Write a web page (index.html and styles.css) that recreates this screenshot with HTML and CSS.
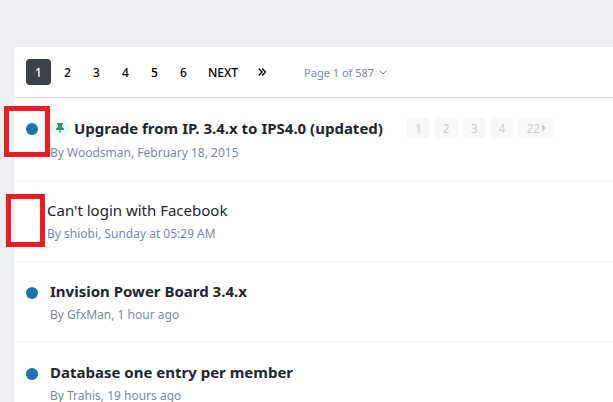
FILE: index.html
```
<!DOCTYPE html>
<html lang="en">
<head>
  <meta charset="UTF-8" />
  <meta name="viewport" content="width=device-width, initial-scale=1.0"/>
  <title>Topics</title>
  <link rel="stylesheet" href="styles.css">
</head>

<body>

  <main class="topic-box">
    <nav class="pagination">
      <a href="#" class="page active">1</a>
      <a href="#" class="page">2</a>
      <a href="#" class="page">3</a>
      <a href="#" class="page">4</a>
      <a href="#" class="page">5</a>
      <a href="#" class="page">6</a>
      <a href="#" class="page next">NEXT</a>
      <a href="#" class="page last" aria-label="Last page">
        <svg width="8" height="8" viewBox="0 0 8 8"><path d="M.7.5 4 4 .7 7.500M4.200.5 7.500 4 4.200 7.500"/></svg>
      </a>
      <button type="button" class="page-jump">Page 1 of 587
        <svg width="8" height="5" viewBox="0 0 8 5"><path d="M.7.7 4 4 7.300.7"/></svg>
      </button>
    </nav>

    <ul class="topic-list">
      <li class="topic unread pinned">
        <div class="status"><span class="dot"></span></div>
        <div class="topic-main">
          <div class="title-row">
            <span class="pin">
              <svg width="8" height="10" viewBox="0 0 8 10"><path d="M1 0h6v1.500H6V4l2 1.500V7H4.600V10H3.400V7H0V5.500L2 4V1.500H1z"/></svg>
            </span>
            <a href="#" class="title">Upgrade from IP. 3.4.x to IPS4.0 (updated)</a>
            <span class="mini-pages">
              <a href="#">1</a>
              <a href="#">2</a>
              <a href="#">3</a>
              <a href="#">4</a>
              <a href="#">22<svg width="4" height="8" viewBox="0 0 4 8"><path d="M0 0 4 4 0 8z"/></svg></a>
            </span>
          </div>
          <p class="meta">By Woodsman, February 18, 2015</p>
        </div>
        <span class="marker marker-unread"></span>
      </li>
      <li class="topic">
        <div class="status"></div>
        <div class="topic-main">
          <div class="title-row"><a href="#" class="title">Can't login with Facebook</a></div>
          <p class="meta">By shiobi, Sunday at 05:29 AM</p>
        </div>
        <span class="marker marker-read"></span>
      </li>
      <li class="topic unread">
        <div class="status"><span class="dot"></span></div>
        <div class="topic-main">
          <div class="title-row"><a href="#" class="title">Invision Power Board 3.4.x</a></div>
          <p class="meta">By GfxMan, 1 hour ago</p>
        </div>
      </li>
      <li class="topic unread">
        <div class="status"><span class="dot"></span></div>
        <div class="topic-main">
          <div class="title-row"><a href="#" class="title">Database one entry per member</a></div>
          <p class="meta">By Trahis, 19 hours ago</p>
        </div>
      </li>
    </ul>
  </main>

</body>
</html>
```
FILE: styles.css
```
:root {
  --bg-color: #ebf0f4;
  --title-color: #22262b;
  --meta-color: #7d879c;
  --unread-color: #1976ac;
  --marker-color: #ed1c24;
}

* {
  box-sizing: border-box;
}

body {
  margin: 0;
  padding: 47px 0 0 14px;
  font-family: "Segoe UI", "Noto Sans", "Open Sans", sans-serif;
  background-color: var(--bg-color);
  color: var(--title-color);
}

a {
  color: inherit;
  text-decoration: none;
}

.topic-box {
  background-color: #fff;
  border-radius: 4px 0 0 0;
  box-shadow: 0 1px 3px rgba(0, 0, 0, 0.06);
}

/* Pagination */
.pagination {
  display: flex;
  align-items: center;
  gap: 4px;
  padding: 12px;
  border-bottom: 1px solid #dcdfe1;
}

.page {
  display: flex;
  align-items: center;
  justify-content: center;
  min-width: 25px;
  height: 26px;
  border-radius: 4px;
  font-size: 12px;
  font-weight: 500;
  color: #000;
}

.page.active {
  background-color: #3d4149;
  color: #fff;
}

.page.next {
  padding: 0 8px;
}

.page.last {
  min-width: 24px;
}

.pagination svg {
  fill: none;
  stroke: currentColor;
  stroke-width: 1.5;
}

.page-jump {
  display: flex;
  align-items: center;
  gap: 5px;
  margin-left: 26px;
  padding: 0;
  border: none;
  background: none;
  font-family: inherit;
  font-size: 11px;
  color: var(--meta-color);
}

.pagination .page-jump svg {
  stroke-width: 1;
}

/* Topics */
.topic-list {
  margin: 0;
  padding: 0;
  list-style: none;
}

.topic {
  position: relative;
  display: flex;
  padding: 17px 12px 15px;
  border-bottom: 1px solid #f0f1f2;
}

.status {
  flex: none;
  width: 21px;
  padding-top: 8px;
}

.unread .status {
  width: 24px;
}

.dot {
  display: block;
  width: 12px;
  height: 12px;
  border-radius: 50%;
  background-color: var(--unread-color);
}

.title-row {
  display: flex;
  align-items: center;
  height: 24px;
}

.pinned .title-row {
  height: 26px;
}

.title {
  font-size: 15px;
  line-height: 22px;
  white-space: nowrap;
}

.unread .title {
  font-weight: 700;
}

.pin {
  display: flex;
  align-items: center;
  justify-content: center;
  width: 20px;
  height: 20px;
  margin-right: 4px;
  border-radius: 50%;
  background-color: #eef9f5;
}

.pin svg {
  fill: #2f9475;
}

.mini-pages {
  display: flex;
  gap: 5px;
  margin-left: 24px;
}

.mini-pages a {
  display: flex;
  align-items: center;
  gap: 2px;
  height: 20px;
  padding: 0 8px;
  border-radius: 4px;
  background-color: #f8f8f8;
  font-size: 12px;
  color: #cfd0d1;
}

.mini-pages svg {
  fill: currentColor;
}

.meta {
  margin: 0;
  font-size: 12px;
  line-height: 24px;
  color: var(--meta-color);
}

/* Red boxes round the read / unread column */
.marker {
  position: absolute;
  border: 5px solid var(--marker-color);
}

.marker-unread {
  top: 8px;
  left: -10px;
  width: 46px;
  height: 51px;
}

.marker-read {
  top: 13px;
  left: -8px;
  width: 39px;
  height: 53px;
}
```
